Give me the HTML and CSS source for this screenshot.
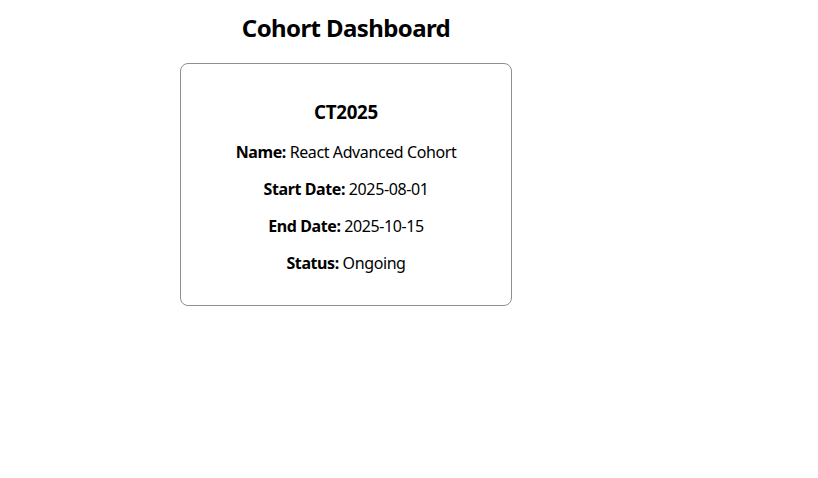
FILE: index.html
```html
<!DOCTYPE html>
<html lang="en">
<head>
<meta charset="utf-8">
<title>Cohort Dashboard</title>
<link rel="stylesheet" href="styles.css">
</head>
<body>
<div class="dashboard">
  <h2 class="title">Cohort Dashboard</h2>
  <div class="card">
    <h3 class="card-code">CT2025</h3>
    <p class="row"><strong>Name:</strong> React Advanced Cohort</p>
    <p class="row"><strong>Start Date:</strong> 2025-08-01</p>
    <p class="row"><strong>End Date:</strong> 2025-10-15</p>
    <p class="row"><strong>Status:</strong> Ongoing</p>
  </div>
</div>
</body>
</html>
```

FILE: styles.css
```css
html, body {
  margin: 0;
  padding: 0;
  background: #ffffff;
}
body {
  font-family: "Noto Sans", "Open Sans", sans-serif;
  color: #000000;
}
.dashboard {
  width: 676px;
  margin: 0 8px;
  padding-top: 12px;
  display: flex;
  flex-direction: column;
  align-items: center;
  text-align: center;
}
.title {
  margin: 0 0 19px;
  font-size: 24px;
  line-height: 32px;
  font-weight: 700;
  letter-spacing: -0.6px;
}
.card {
  box-sizing: border-box;
  width: 332px;
  border: 1px solid #8f8f8f;
  border-radius: 8px;
  padding: 16px 16px 15px;
}
.card-code {
  margin: 18.72px 0;
  font-size: 18.72px;
  line-height: 25px;
  font-weight: 700;
  letter-spacing: -0.3px;
}
.row {
  margin: 16px 0;
  font-size: 16px;
  line-height: 21px;
  letter-spacing: -0.4px;
}
.row strong {
  font-weight: 700;
}
```
